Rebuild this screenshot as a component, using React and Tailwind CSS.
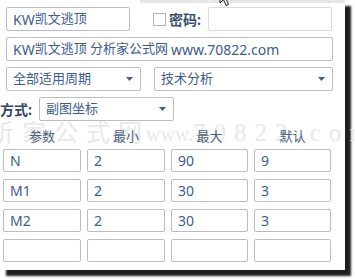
import React from "react";

const font = { fontFamily: '"Noto Sans", "Noto Sans CJK SC", sans-serif' };

const Arrow = () => (
  <svg width="7" height="4" viewBox="0 0 7 4" className="shrink-0">
    <path d="M0 0H7L3.5 4Z" fill="#4b5b72" />
  </svg>
);

const Input = ({ children, className = "" }) => (
  <div
    className={`h-[24px] border border-[#bcbcc4] rounded-[2px] bg-white flex items-center pl-[6px] text-[13px] text-[#3d5c8f] whitespace-nowrap overflow-hidden ${className}`}
  >
    {children}
  </div>
);

const Select = ({ value, className = "" }) => (
  <div
    className={`h-[24px] border border-[#bcbcc4] rounded-[2px] bg-white flex items-center justify-between pl-[6px] pr-[7px] text-[13px] text-[#3d5c8f] whitespace-nowrap ${className}`}
  >
    <span>{value}</span>
    <Arrow />
  </div>
);

const Colon = () => (
  <span className="w-[9px] shrink-0 text-[14px] text-[#5a8ad0] leading-none -ml-[3px]">:</span>
);

export default function App() {
  const rows = [
    ["N", "2", "90", "9"],
    ["M1", "2", "30", "3"],
    ["M2", "2", "30", "3"],
    ["", "", "", ""],
  ];
  return (
    <div className="w-[355px] h-[279px] bg-white overflow-hidden relative" style={font}>
      <div className="w-[345px] h-[270px] bg-white shadow-[6px_6px_2px_rgba(0,0,0,0.88)] relative flex flex-col">
        <div className="h-[3px] ml-[140px] bg-[#e7e7e7] shrink-0" />
        {/* watermark */}
        <div className="absolute left-[-42px] top-[113px] whitespace-nowrap text-[#e8e8e8] pointer-events-none select-none flex items-baseline">
          <span className="text-[24px] tracking-[8px]" style={{ fontFamily: '"Noto Sans CJK SC", serif' }}>分析家公式网</span>
          <span className="text-[20px] -ml-[4px]" style={{ fontFamily: '"Liberation Serif", serif' }}>www.</span>
          <span className="text-[25px] tracking-[8px]" style={{ fontFamily: '"Liberation Serif", serif' }}>70822.com</span>
        </div>
        <div className="flex flex-col gap-[6px] pt-[4px] relative">
          <div className="flex items-center">
            <Colon />
            <Input className="w-[124px]">
              <span className="text-[14px]">KW</span>凯文逃顶
            </Input>
            <div className="w-[13px] h-[13px] border border-[#b4b4bc] bg-white ml-[23px] mt-[1px]" />
            <span className="ml-[3px] text-[14px] font-bold text-[#3b4f72]">密码:</span>
            <div className="h-[24px] w-[124px] border border-[#dcdcdc] rounded-[2px] bg-white ml-[7px]" />
          </div>
          <div className="flex items-center">
            <Colon />
            <Input className="w-[327px]">
              <span className="text-[14px]">KW</span>凯文逃顶 分析家公式网 <span className="text-[14px] ml-[3px]">www.70822.com</span>
            </Input>
          </div>
          <div className="flex items-center">
            <Colon />
            <Select value="全部适用周期" className="w-[135px]" />
            <Select value="技术分析" className="w-[179px] ml-[13px]" />
          </div>
          <div className="flex items-center">
            <span className="w-[39px] shrink-0 text-[14px] font-bold text-[#33466a]">方式:</span>
            <Select value="副图坐标" className="w-[135px]" />
          </div>
        </div>
        <div className="relative flex flex-col pl-[3px] mt-[3px]">
          <div className="grid grid-cols-[78px_78px_77px_77px] gap-x-[6px] h-[25px] items-center text-[13px] text-[#4a5d80] text-center">
            <span>参数</span>
            <span>最小</span>
            <span>最大</span>
            <span>默认</span>
          </div>
          <div className="grid grid-cols-[78px_78px_77px_77px] gap-x-[6px] gap-y-[7px]">
            {rows.map((r, i) =>
              r.map((v, j) => (
                <div
                  key={`${i}-${j}`}
                  className="h-[23px] border border-[#bcbcc4] rounded-[2px] bg-white flex items-center pl-[6px] text-[14px] text-[#3d5c8f]"
                >
                  {v}
                </div>
              ))
            )}
          </div>
        </div>
      </div>
      {/* mouse cursor */}
      <svg className="absolute left-[219px] top-[-13px]" width="14" height="21" viewBox="0 0 14 21">
        <path d="M1 1V16L4.5 12.5L7 18.5L9.5 17.5L7 11.5H12Z" fill="white" stroke="#222" strokeWidth="1" strokeLinejoin="round" />
      </svg>
    </div>
  );
}
